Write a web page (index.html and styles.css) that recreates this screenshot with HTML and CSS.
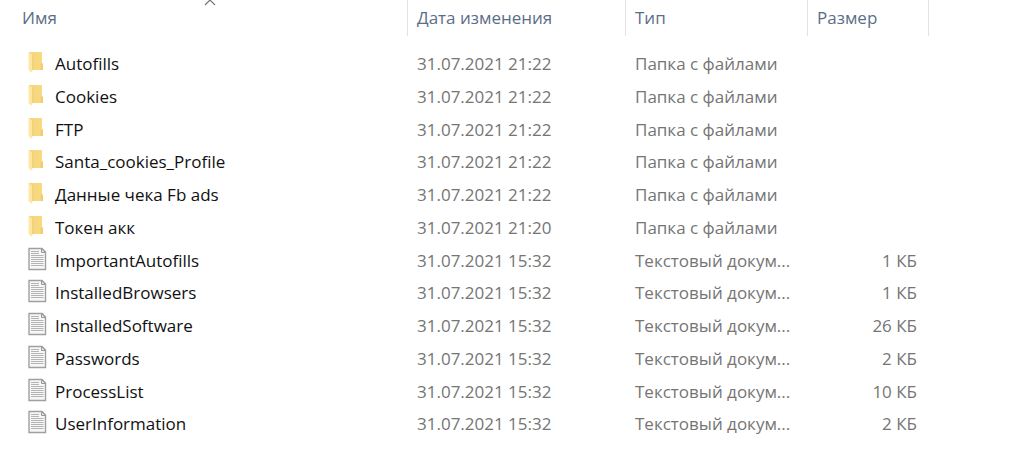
FILE: index.html
```html
<!DOCTYPE html>
<html lang="ru">
<head>
<meta charset="utf-8">
<title>Файлы</title>
<link rel="stylesheet" href="styles.css">
</head>
<body>
<svg class="sprites" aria-hidden="true">
  <defs>
    <linearGradient id="back" x1="0" y1="0" x2="1" y2="0"><stop offset="0" stop-color="#f3d47c"/><stop offset="1" stop-color="#fada81"/></linearGradient>
    <linearGradient id="front" x1="0" y1="0" x2="1" y2="0"><stop offset="0" stop-color="#ffe9a8"/><stop offset="1" stop-color="#fde49c"/></linearGradient>
  </defs>
  <symbol id="folder" viewBox="0 0 20 24">
    <path d="M1 2H14V13L15 14V20H1Z" fill="url(#back)"/>
    <path d="M12.500 14.500L14 13L15 14V20H12.500Z" fill="#f3cd6c"/>
    <path d="M0.500 2L4.500 4.500V21L3.500 22.500L0.500 20Z" fill="url(#front)"/>
    <path d="M4.700 4.500V20" stroke="#ecca6c" stroke-width=".7"/>
  </symbol>
  <symbol id="doc" viewBox="0 0 20 24">
    <path d="M1 1.500H14L17.500 5V22.500H1Z" fill="#f7f7f7" stroke="#a0a0a0" stroke-width="1.400"/>
    <path d="M13.500 1.500V5.500H17.500Z" fill="#e2e2e2" stroke="#999" stroke-width="1"/>
    <path d="M3 4.500H11M3 6.500H11M3 8.500H15.500M3 10.500H15.500M3 12.500H15.500M3 14.500H15.500M3 16.500H15.500M3 18.500H15.500" stroke="#b4b4b4" stroke-width="1"/>
  </symbol>
</svg>
<main class="list">
<table class="files">
  <colgroup><col><col class="col-date"><col class="col-type"><col class="col-size"></colgroup>
  <thead>
    <tr>
      <th aria-sort="ascending"><button type="button">Имя</button><svg class="sort" viewBox="0 0 12 6" aria-hidden="true"><path d="M1 5L6 0L11 5" fill="none" stroke="#777" stroke-width="1.200"/></svg></th>
      <th><button type="button">Дата изменения</button></th>
      <th><button type="button">Тип</button></th>
      <th><button type="button">Размер</button></th>
    </tr>
  </thead>
  <tbody>
    <tr><td><div class="name"><svg class="icon"><use href="#folder"/></svg>Autofills</div></td><td>31.07.2021 21:22</td><td>Папка с файлами</td><td></td></tr>
    <tr><td><div class="name"><svg class="icon"><use href="#folder"/></svg>Cookies</div></td><td>31.07.2021 21:22</td><td>Папка с файлами</td><td></td></tr>
    <tr><td><div class="name"><svg class="icon"><use href="#folder"/></svg>FTP</div></td><td>31.07.2021 21:22</td><td>Папка с файлами</td><td></td></tr>
    <tr><td><div class="name"><svg class="icon"><use href="#folder"/></svg>Santa_cookies_Profile</div></td><td>31.07.2021 21:22</td><td>Папка с файлами</td><td></td></tr>
    <tr><td><div class="name"><svg class="icon"><use href="#folder"/></svg>Данные чека Fb ads</div></td><td>31.07.2021 21:22</td><td>Папка с файлами</td><td></td></tr>
    <tr><td><div class="name"><svg class="icon"><use href="#folder"/></svg>Токен акк</div></td><td>31.07.2021 21:20</td><td>Папка с файлами</td><td></td></tr>
    <tr><td><div class="name"><svg class="icon"><use href="#doc"/></svg>ImportantAutofills</div></td><td>31.07.2021 15:32</td><td>Текстовый докум...</td><td>1 КБ</td></tr>
    <tr><td><div class="name"><svg class="icon"><use href="#doc"/></svg>InstalledBrowsers</div></td><td>31.07.2021 15:32</td><td>Текстовый докум...</td><td>1 КБ</td></tr>
    <tr><td><div class="name"><svg class="icon"><use href="#doc"/></svg>InstalledSoftware</div></td><td>31.07.2021 15:32</td><td>Текстовый докум...</td><td>26 КБ</td></tr>
    <tr><td><div class="name"><svg class="icon"><use href="#doc"/></svg>Passwords</div></td><td>31.07.2021 15:32</td><td>Текстовый докум...</td><td>2 КБ</td></tr>
    <tr><td><div class="name"><svg class="icon"><use href="#doc"/></svg>ProcessList</div></td><td>31.07.2021 15:32</td><td>Текстовый докум...</td><td>10 КБ</td></tr>
    <tr><td><div class="name"><svg class="icon"><use href="#doc"/></svg>UserInformation</div></td><td>31.07.2021 15:32</td><td>Текстовый докум...</td><td>2 КБ</td></tr>
  </tbody>
</table>
</main>
</body>
</html>
```
FILE: styles.css
```css
body {
  margin: 0;
  background: #fff;
  color: #757575;
  font-family: "Open Sans", "Noto Sans", sans-serif;
  font-size: 17px;
}

.sprites {
  position: absolute;
  width: 0;
  height: 0;
}

.list {
  padding: 0 84px 0 13px;
}

.files {
  width: 100%;
  table-layout: fixed;
  border-collapse: separate;
  border-spacing: 0;
}

.col-date { width: 218px; }
.col-type { width: 182px; }
.col-size { width: 121px; }

th {
  position: relative;
  height: 36px;
  padding: 0;
  border-right: 1px solid #e3e3e3;
}

th button {
  display: block;
  width: 100%;
  height: 36px;
  padding: 0 9px;
  border: 0;
  background: none;
  color: #5b6e88;
  font: inherit;
  font-weight: 400;
  line-height: 36px;
  text-align: left;
}

.sort {
  position: absolute;
  top: 0;
  left: 50%;
  width: 12px;
  height: 6px;
  margin-left: -6px;
}

tbody::before {
  content: "";
  display: block;
  height: 11px;
}

td {
  height: 33px;
  padding: 0 9px;
  line-height: 32px;
  white-space: nowrap;
}

/* The list is slightly tighter than 33px per row. */
tr:nth-child(4n) td {
  height: 32px;
}

td:last-child {
  padding-right: 12px;
  text-align: right;
}

.name {
  display: flex;
  gap: 7px;
  padding-left: 6px;
  color: #111;
}

.icon {
  width: 20px;
  height: 24px;
  margin-top: 2px;
}
```
